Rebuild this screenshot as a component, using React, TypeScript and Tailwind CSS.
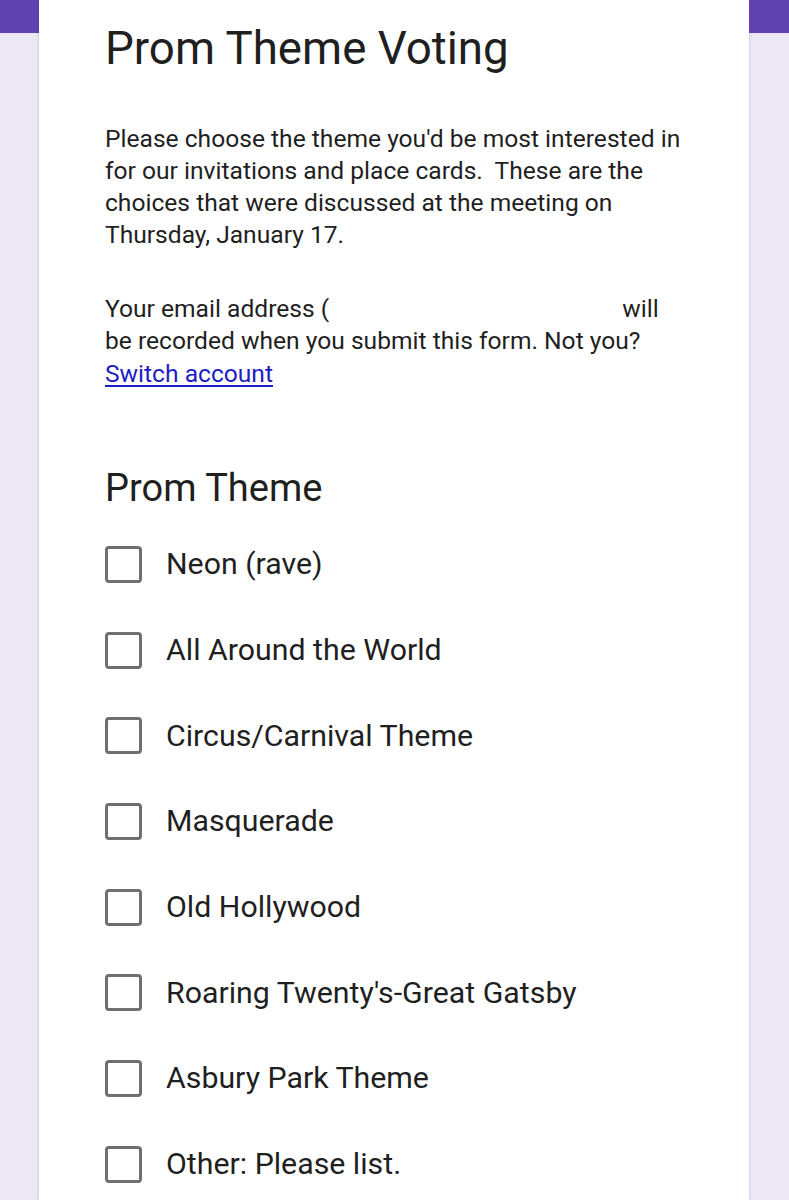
const options = [
  'Neon (rave)',
  'All Around the World',
  'Circus/Carnival Theme',
  'Masquerade',
  'Old Hollywood',
  "Roaring Twenty's-Great Gatsby",
  'Asbury Park Theme',
  'Other: Please list.',
];

function Checkbox() {
  return <div className="w-[37px] h-[37px] shrink-0 rounded-[4px] border-[3.5px] border-[#6f6f6f] bg-white" />;
}

export default function App() {
  return (
    <div
      className="min-h-[1200px] bg-[#ebe7f5] grid grid-cols-[39px_710px_40px] text-[#1f1f1f]"
      style={{ fontFamily: 'Roboto, "Noto Sans", sans-serif' }}
    >
      <div>
        <div className="h-[33px] bg-[#6041b0]" />
      </div>

      <div className="bg-white h-[1200px] overflow-hidden pl-[66px] pr-[30px] pt-[21px] shadow-[0_0_3px_rgba(0,0,0,0.18)]">
        <h1 className="text-[45.7px] leading-[55px] font-normal">Prom Theme Voting</h1>

        <p className="mt-[46.5px] w-[580px] text-[24.6px] leading-[32.3px] whitespace-pre-wrap">
          {"Please choose the theme you'd be most interested in for our invitations and place cards.  These are the choices that were discussed at the meeting on Thursday, January 17."}
        </p>

        {/* the address itself is blanked out in the screenshot */}
        <p className="mt-[41.5px] w-[580px] text-[24.6px] leading-[32.3px]">
          <span className="mr-[293px]">Your email address (</span>will be recorded when you submit this form. Not you?{' '}
          <a href="#" className="text-[#1d1dc6] underline underline-offset-[3px]">
            Switch account
          </a>
        </p>

        <h2 className="mt-[74.5px] text-[38px] leading-[46px] font-normal">Prom Theme</h2>

        <div className="mt-[11px] flex flex-col">
          {options.map((o) => (
            <div key={o} className="h-[85.7px] flex items-center gap-[24px]">
              <Checkbox />
              <span className="text-[30.3px] leading-none">{o}</span>
            </div>
          ))}
        </div>
      </div>

      <div>
        <div className="h-[33px] bg-[#6041b0]" />
      </div>
    </div>
  );
}
